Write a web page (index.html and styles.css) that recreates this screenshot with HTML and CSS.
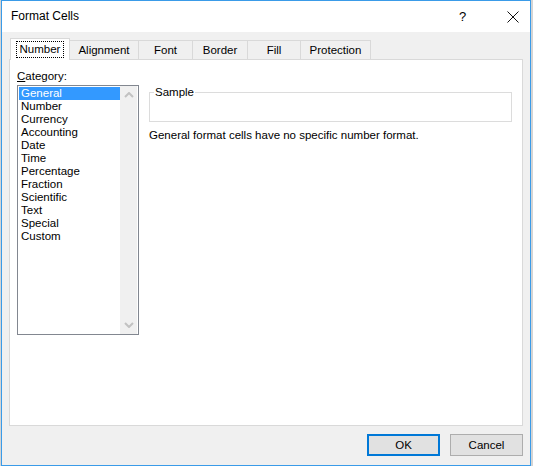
FILE: index.html
```html
<!DOCTYPE html>
<html>
<head>
<meta charset="utf-8">
<link rel="stylesheet" href="styles.css">
</head>
<body>
<div class="desk">
  <div class="window">
    <div class="titlebar">
      <span class="title">Format Cells</span>
      <span class="help">?</span>
      <span class="close"><svg width="12" height="12" viewBox="0 0 12 12"><path d="M0.5 0.5L11.5 11.5M11.5 0.5L0.5 11.5" stroke="#111" stroke-width="1" fill="none"/></svg></span>
    </div>
    <div class="body">
      <div class="tabs">
        <div class="tab active"><span class="focus">Number</span></div>
        <div class="tab w-align">Alignment</div>
        <div class="tab w-font">Font</div>
        <div class="tab w-border">Border</div>
        <div class="tab w-fill">Fill</div>
        <div class="tab w-prot">Protection</div>
      </div>
      <div class="panel">
        <div class="left">
          <div class="label"><u>C</u>ategory:</div>
          <div class="listbox">
            <ul class="items">
              <li class="sel">General</li>
              <li>Number</li>
              <li>Currency</li>
              <li>Accounting</li>
              <li>Date</li>
              <li>Time</li>
              <li>Percentage</li>
              <li>Fraction</li>
              <li>Scientific</li>
              <li>Text</li>
              <li>Special</li>
              <li>Custom</li>
            </ul>
            <div class="scroll">
              <svg width="10" height="6" viewBox="0 0 10 6"><path d="M1 5L5 1L9 5" stroke="#c2c2c2" stroke-width="2" fill="none"/></svg>
              <svg width="10" height="6" viewBox="0 0 10 6"><path d="M1 1L5 5L9 1" stroke="#c2c2c2" stroke-width="2" fill="none"/></svg>
            </div>
          </div>
        </div>
        <div class="right">
          <fieldset class="sample"><legend>Sample</legend></fieldset>
          <div class="desc">General format cells have no specific number format.</div>
        </div>
      </div>
      <div class="buttons">
        <div class="btn ok">OK</div>
        <div class="btn">Cancel</div>
      </div>
    </div>
  </div>
</div>
</body>
</html>
```
FILE: styles.css
```css
html, body {
  margin: 0;
  padding: 0;
}
body {
  background: #e9e9e9;
  font-family: "Liberation Sans", Arial, sans-serif;
  font-size: 11.5px;
  color: #000;
}
.desk {
  padding-left: 1px;
  height: 466px;
  background: #d4d4d4;
}
.window {
  width: 528px;
  height: 464px;
  border: 1px solid #3a9be8;
  background: #f0f0f0;
  display: flex;
  flex-direction: column;
}
.titlebar {
  height: 31px;
  background: #fff;
  display: flex;
  align-items: center;
  position: relative;
}
.title {
  margin-left: 9px;
  font-size: 12px;
  margin-top: -1px;
}
.help {
  position: absolute;
  left: 457px;
  top: 8px;
  font-size: 13px;
}
.close {
  position: absolute;
  left: 505px;
  top: 10px;
  line-height: 0;
}
.body {
  flex: 1;
  padding: 6px 7px 0 7px;
  display: flex;
  flex-direction: column;
}
.tabs {
  display: flex;
  height: 21px;
  align-items: flex-end;
  position: relative;
  z-index: 1;
}
.tab {
  height: 18px;
  border: 1px solid #d9d9d9;
  border-bottom: none;
  background: #f0f0f0;
  text-align: center;
  line-height: 18px;
  margin-left: -1px;
  box-sizing: content-box;
}
.tab.active {
  height: 21px;
  width: 58px;
  background: #fff;
  margin-left: 1px;
  margin-right: -1px;
  z-index: 2;
  margin-bottom: -1px;
  line-height: 20px;
  position: relative;
}
.focus {
  border: 1px dotted #000;
  padding: 0 3px;
  line-height: 15px;
  display: inline-block;
}
.w-align { width: 68px; margin-left: 0; }
.w-font { width: 53px; }
.w-border { width: 54px; }
.w-fill { width: 52px; }
.w-prot { width: 69px; }
.panel {
  height: 365px;
  width: 512px;
  background: #fff;
  border: 1px solid #d9d9d9;
  display: flex;
}
.left {
  margin-left: 7px;
  margin-top: 9px;
}
.label {
  line-height: 15px;
  margin-bottom: 1px;
}
.listbox {
  width: 120px;
  height: 248px;
  border: 1px solid #828790;
  display: flex;
  background: #fff;
}
.items {
  list-style: none;
  margin: 1px 0 0 1px;
  padding: 0;
  width: 101px;
}
.items li {
  height: 13px;
  line-height: 13px;
  padding-left: 2px;
}
.items li.sel {
  background: #3399ff;
  color: #fff;
}
.scroll {
  width: 17px;
  background: #f0f0f0;
  display: flex;
  flex-direction: column;
  justify-content: space-between;
  align-items: center;
  padding: 6px 0 6px;
}
.right {
  margin-left: 10px;
  margin-top: 25px;
}
.sample {
  width: 363px;
  margin: 0;
  padding: 0;
  border: 1px solid #dcdcdc;
  box-sizing: border-box;
  height: 37px;
}
.sample legend {
  padding: 0 1px;
  margin-left: 4px;
  line-height: 14px;
}
.desc {
  margin-top: 5px;
  line-height: 16px;
}
.buttons {
  display: flex;
  justify-content: flex-end;
  gap: 10px;
  margin-top: 8px;
}
.btn {
  width: 71px;
  height: 20px;
  border: 1px solid #adadad;
  background: #e1e1e1;
  text-align: center;
  line-height: 20px;
}
.btn.ok {
  width: 69px;
  height: 18px;
  border: 2px solid #0078d7;
  line-height: 18px;
}
```
